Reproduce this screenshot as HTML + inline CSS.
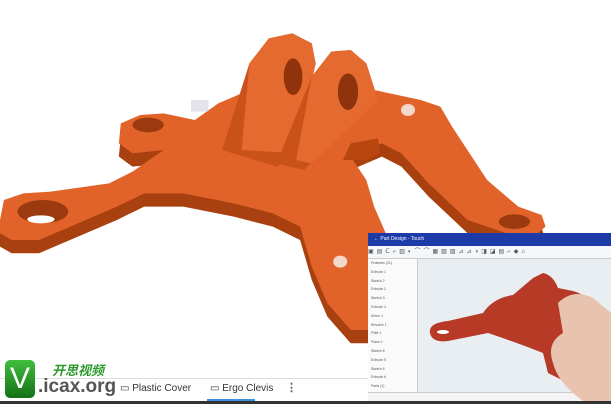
<!DOCTYPE html>
<html><head><meta charset="utf-8"><style>
body{margin:0;width:611px;height:404px;overflow:hidden;background:#fff;position:relative;font-family:"Liberation Sans",sans-serif}
.abs{position:absolute}
</style></head><body>
<svg class="abs" style="left:0;top:0" width="611" height="404">
<g transform="translate(0,20) scale(0.3897,0.3333)">
 <g transform="translate(0,40)" fill="#a9400f">
  <polygon points="0,600 10,540 60,520 130,515 280,490 340,455 420,390 340,400 305,370 310,310 360,285 420,280 500,300 560,250 620,220 960,210 1080,240 1130,260 1160,320 1250,480 1330,560 1390,585 1400,620 1380,640 1300,640 1200,600 1100,490 1030,400 980,370 900,410 940,480 960,560 990,640 1000,930 900,930 840,850 800,740 770,620 700,580 600,550 470,520 370,520 300,560 200,610 100,660 30,660 0,640"/>
 </g>
 <polygon fill="#e2632a" points="0,600 10,540 60,520 130,515 280,490 340,455 420,390 340,400 305,370 310,310 360,285 420,280 500,300 560,250 620,220 960,210 1080,240 1130,260 1160,320 1250,480 1330,560 1390,585 1400,620 1380,640 1300,640 1200,600 1100,490 1030,400 980,370 900,410 940,480 960,560 990,640 1000,930 900,930 840,850 800,740 770,620 700,580 600,550 470,520 370,520 300,560 200,610 100,660 30,660 0,640"/>
 <polygon fill="#b8460f" points="880,420 900,370 970,355 975,400 940,420"/>
 <ellipse cx="110" cy="575" rx="65" ry="35" fill="#9a3a0e"/>
 <ellipse cx="105" cy="598" rx="35" ry="12" fill="#fff"/>
 <ellipse cx="380" cy="315" rx="40" ry="22" fill="#9a3a0e"/>
 <ellipse cx="1320" cy="605" rx="40" ry="22" fill="#9a3a0e"/>
 <polygon fill="#c9521a" points="570,390 640,130 690,55 750,40 800,70 810,130 760,400 710,440"/>
 <polygon fill="#e56a30" points="640,130 690,55 750,40 800,70 810,130 760,400 620,390"/>
 <ellipse cx="752" cy="170" rx="24" ry="55" fill="#8e330b"/>
 <polygon fill="#c9521a" points="710,430 800,170 850,95 900,90 940,130 970,240 780,450"/>
 <polygon fill="#e56a30" points="800,170 850,95 900,90 940,130 970,240 800,430 760,420"/>
 <ellipse cx="893" cy="215" rx="26" ry="55" fill="#8e330b"/>
 <circle cx="1047" cy="270" r="18" fill="#f3d8cc"/>
 <circle cx="873" cy="725" r="18" fill="#f3d8cc"/>
 <rect x="490" y="240" width="45" height="35" fill="#c8c8d8" opacity=".5"/>
</g>
</svg>
<!-- bottom tabs -->
<div class="abs" style="left:0;top:378px;width:368px;height:1px;background:#ddd"></div>
<div class="abs" style="left:120px;top:383px;font-size:10px;color:#333">▭ Plastic Cover</div>
<div class="abs" style="left:210px;top:383px;font-size:10px;color:#333">▭ Ergo Clevis</div>
<div class="abs" style="left:286px;top:381px;font-size:11px;color:#555;font-weight:bold">⋮</div>
<div class="abs" style="left:207px;top:399px;width:48px;height:3px;background:#3a8ee0"></div>
<div class="abs" style="left:0;top:401px;width:611px;height:3px;background:#333"></div>
<!-- logo -->
<div class="abs" style="left:5px;top:360px;width:30px;height:38px;border-radius:5px;background:linear-gradient(#3fbf3f,#157015);color:#fff;font-size:30px;text-align:center;line-height:38px">V</div>
<div class="abs" style="left:52px;top:360px;font-size:13px;color:#2a9a2a;font-weight:bold;font-style:italic;font-family:'Liberation Sans','Noto Sans CJK SC',sans-serif">开思视频</div>
<div class="abs" style="left:38px;top:376px;font-size:19px;color:#555;font-weight:bold">.icax.org</div>
<!-- inset -->
<div class="abs" style="left:368px;top:233px;width:243px;height:168px;background:#e8eef2;overflow:hidden">
 <div class="abs" style="left:0;top:0;width:243px;height:13px;background:#1c3aa8;color:#fff;font-size:5px;line-height:13px;padding-left:6px">← Part Design - Touch</div>
 <div class="abs" style="left:0;top:13px;width:243px;height:12px;background:#f4f6f8;border-bottom:1px solid #ccc;font-size:6px;color:#556;letter-spacing:3px;line-height:12px">▣▤ᑕ⌐▥◐⌒⌒▦▧▨⊿⊿◑◨◪▤⌐◆⌂</div>
 <div class="abs" style="left:0;top:26px;width:46px;height:142px;background:#fafafa;border-right:1px solid #ccc;font-size:3.5px;color:#556;line-height:8.8px;padding-left:3px">Features (21)<br>Extrude 1<br>Sketch 2<br>Extrude 2<br>Sketch 3<br>Extrude 4<br>Mirror 1<br>Revolve 1<br>Fillet 1<br>Plane 1<br>Sketch 5<br>Extrude 5<br>Sketch 6<br>Extrude 6<br>Parts (1)</div>
 <div class="abs" style="left:0;top:159px;width:243px;height:9px;background:#f4f4f4;border-top:1px solid #ccc"></div>
 <svg class="abs" style="left:0;top:0" width="243" height="168">
  <path d="M62,100 Q60,90 80,88 L115,80 Q125,65 145,62 L165,45 L175,40 Q185,42 190,55 L205,58 Q220,62 225,75 L220,130 L200,150 L180,140 L175,120 Q150,110 120,100 L80,108 Q64,110 62,100Z" fill="#b63a26"/>
  <ellipse cx="75" cy="99" rx="6" ry="2" fill="#fff"/>
  <path d="M190,70 Q205,55 225,65 L243,80 L243,168 L215,168 Q190,150 185,130 Q178,110 195,100 Z" fill="#e8c3b0"/>
 </svg>
</div>
</body></html>
